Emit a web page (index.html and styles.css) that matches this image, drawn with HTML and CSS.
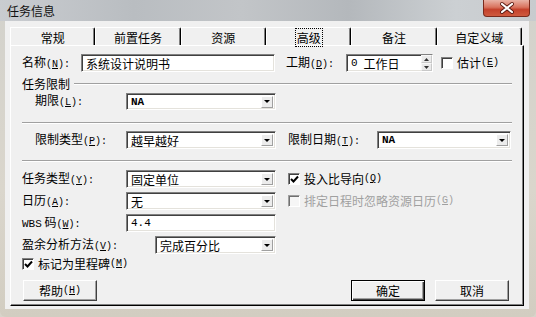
FILE: index.html
```html
<!DOCTYPE html>
<html lang="zh-CN">
<head>
    <meta charset="UTF-8">
    <title>任务信息</title>
    <link rel="stylesheet" href="styles.css">
</head>
<body>
<div class="window">
    <div class="titlebar">
        <span class="title">任务信息</span>
        <span class="close">
            <svg width="47" height="17" viewBox="0 0 47 17">
                <path d="M19 4 L29 12 M29 4 L19 12" stroke="#5a1a12" stroke-width="4" stroke-linecap="round"/>
                <path d="M19 4 L29 12 M29 4 L19 12" stroke="#fff" stroke-width="2.2" stroke-linecap="round"/>
            </svg>
        </span>
    </div>
    <div class="client">
        <div class="tabs">
            <div class="tab">常规</div>
            <div class="tab">前置任务</div>
            <div class="tab">资源</div>
            <div class="tab active"><span class="focus">高级</span></div>
            <div class="tab">备注</div>
            <div class="tab">自定义域</div>
        </div>
        <div class="panel">
            <div class="row row-name">
                <span class="lbl name-label">名称<span class="k">(<u>N</u>):</span></span>
                <div class="field name-field">系统设计说明书</div>
                <span class="lbl dur-label">工期<span class="k">(<u>D</u>):</span></span>
                <div class="field dur-field">
                    <span class="mono">0</span><span class="dur-unit">工作日</span>
                    <span class="spin">
                        <span class="spin-btn"><svg width="5" height="3"><path d="M0 3 L2.5 0 L5 3 Z" fill="#333"/></svg></span>
                        <span class="spin-btn"><svg width="5" height="3"><path d="M0 0 L2.5 3 L5 0 Z" fill="#333"/></svg></span>
                    </span>
                </div>
                <span class="check est-check"><span class="box"></span>估计<span class="k">(<u>E</u>)</span></span>
            </div>

            <div class="group">
                <span>任务限制</span>
                <span class="etch"></span>
            </div>

            <div class="row row-deadline">
                <span class="lbl limit-label">期限<span class="k">(<u>L</u>):</span></span>
                <div class="field combo c150"><span class="mono bold">NA</span><span class="drop"></span></div>
            </div>

            <div class="sep sep-1"></div>

            <div class="row row-constraint">
                <span class="lbl limit-label">限制类型<span class="k">(<u>P</u>):</span></span>
                <div class="field combo c150">越早越好<span class="drop"></span></div>
                <span class="lbl date-label">限制日期<span class="k">(<u>T</u>):</span></span>
                <div class="field combo c134"><span class="mono bold">NA</span><span class="drop"></span></div>
            </div>

            <div class="sep sep-2"></div>

            <div class="row row-type">
                <span class="lbl type-label">任务类型<span class="k">(<u>Y</u>):</span></span>
                <div class="field combo c150">固定单位<span class="drop"></span></div>
                <span class="check side-check"><span class="box checked"><svg width="9" height="9" viewBox="0 0 9 9"><path d="M1 4 L3.5 6.5 L8 1.5" stroke="#000" stroke-width="2" fill="none"/></svg></span>投入比导向<span class="k">(<u>Q</u>)</span></span>
            </div>

            <div class="row row-tight">
                <span class="lbl type-label">日历<span class="k">(<u>A</u>):</span></span>
                <div class="field combo c150">无<span class="drop"></span></div>
                <span class="check side-check disabled"><span class="box"></span>排定日程时忽略资源日历<span class="k">(<u>G</u>)</span></span>
            </div>

            <div class="row row-tight">
                <span class="lbl type-label"><span class="mono">WBS</span> 码<span class="k">(<u>W</u>):</span></span>
                <div class="field c150"><span class="mono">4.4</span></div>
            </div>

            <div class="row row-tight">
                <span class="lbl ev-label">盈余分析方法<span class="k">(<u>V</u>):</span></span>
                <div class="field combo c121">完成百分比<span class="drop"></span></div>
            </div>

            <div class="row row-milestone">
                <span class="check"><span class="box checked"><svg width="9" height="9" viewBox="0 0 9 9"><path d="M1 4 L3.5 6.5 L8 1.5" stroke="#000" stroke-width="2" fill="none"/></svg></span>标记为里程碑<span class="k">(<u>M</u>)</span></span>
            </div>

            <div class="row row-buttons">
                <span class="btn">帮助<span class="k">(<u>H</u>)</span></span>
                <span class="spacer"></span>
                <span class="btn default">确定</span>
                <span class="btn cancel">取消</span>
            </div>
        </div>
    </div>
</div>
</body>
</html>
```

FILE: styles.css
```css
body {
    margin: 0;
    padding: 0;
    font-family: "Noto Sans CJK SC", sans-serif;
    font-size: 12px;
    color: #000;
    background-color: #d8d4ca;
}
.window {
    width: 536px;
    height: 317px;
    box-sizing: border-box;
    padding: 0 7px 0 5px;
    background: linear-gradient(180deg, #d3d2cc 0%, #dad6cc 60%, #d2cdc1 100%);
    border-bottom-left-radius: 6px;
    border-bottom-right-radius: 6px;
    overflow: hidden;
}
.titlebar {
    height: 21px;
    margin: 0 -7px 0 -5px;
    padding-left: 7px;
    display: flex;
    justify-content: space-between;
    background: linear-gradient(90deg, #c9ccd0 0%, #b9bdc1 25%, #c2c5c8 45%, #b4b8bc 65%, #ccd0d3 85%, #c8cbce 100%);
}
.title {
    line-height: 22px;
    color: #111;
}
.close {
    width: 47px;
    height: 17px;
    margin-right: 6px;
    box-sizing: border-box;
    border: 1px solid #7a2a1c;
    border-top: none;
    border-bottom-left-radius: 4px;
    border-bottom-right-radius: 4px;
    background: linear-gradient(180deg, #e9b2a5 0%, #d9735e 45%, #c4412b 60%, #cf5a3e 100%);
    overflow: hidden;
}
.close svg {
    display: block;
    margin-left: -1px;
}
.client {
    height: 288px;
    box-sizing: border-box;
    padding: 6px 5px 3px 5px;
    background-color: #f0f0f0;
}
.tabs {
    display: flex;
    width: 512px;
    height: 18px;
}
.tab {
    flex: 1;
    box-sizing: border-box;
    border-top: 1px solid #fff;
    border-left: 1px solid #fff;
    border-right: 1px solid #000;
    border-top-right-radius: 2px;
    box-shadow: inset -1px 0 0 #808080;
    text-align: center;
    line-height: 17px;
    padding-top: 1px;
}
.focus {
    outline: 1px dotted #000;
    outline-offset: 0;
    padding: 0 1px;
}
.panel {
    width: 514px;
    height: 261px;
    box-sizing: border-box;
    padding: 8px 11px 3px 11px;
    border: 1px solid;
    border-color: #fff #000 #000 #fff;
    box-shadow: inset -1px -1px 0 #808080;
}
.row {
    display: flex;
    align-items: center;
    height: 18px;
}
.row-deadline {
    margin-top: 3px;
    height: 17px;
}
.row-constraint {
    margin-top: 7px;
}
.row-type {
    margin-top: 8px;
}
.row-tight {
    margin-top: 4px;
}
.row-milestone {
    margin-top: 4px;
    height: 12px;
}
.row-buttons {
    margin-top: 10px;
    height: 21px;
}
.lbl {
    flex: none;
    white-space: nowrap;
    line-height: 14px;
}
.k {
    font-family: "Liberation Mono", monospace;
    font-size: 10px;
}
.mono {
    font-family: "Liberation Mono", monospace;
    font-size: 11px;
}
.bold {
    font-weight: bold;
}
.name-label { width: 59px; }
.dur-label { width: 60px; margin-left: 11px; }
.limit-label { width: 91px; margin-left: 13px; }
.date-label { width: 89px; margin-left: 12px; }
.type-label { width: 104px; }
.ev-label { width: 133px; }

.field {
    flex: none;
    height: 100%;
    box-sizing: border-box;
    display: flex;
    align-items: center;
    padding-left: 4px;
    background-color: #fff;
    border: 1px solid;
    border-color: #808080 #fff #fff #808080;
    box-shadow: inset 1px 1px 0 #404040, inset -1px -1px 0 #e4e2dc;
    white-space: nowrap;
}
.name-field { width: 194px; }
.dur-field { width: 87px; padding-right: 0; }
.c150 { width: 150px; }
.c134 { width: 134px; }
.c121 { width: 121px; }
.dur-unit {
    margin-left: 6px;
}
.spin {
    margin-left: auto;
    width: 11px;
    height: 16px;
    display: flex;
    flex-direction: column;
}
.spin-btn {
    flex: 1;
    display: flex;
    align-items: center;
    justify-content: center;
    background-color: #eaeaea;
    border: 1px solid #f8f8f8;
    border-right-color: #c8c8c8;
    border-bottom-color: #c8c8c8;
}
.spin-btn svg { display: block; }
.drop {
    margin-left: auto;
    margin-right: 2px;
    width: 12px;
    height: 12px;
    box-sizing: border-box;
    border: 1px solid;
    border-color: #fff #a0a0a0 #a0a0a0 #fff;
    background-color: #ececec;
    display: flex;
    align-items: center;
    justify-content: center;
}
.drop::after {
    content: "";
    border-left: 3px solid transparent;
    border-right: 3px solid transparent;
    border-top: 3px solid #000;
}
.check {
    display: flex;
    align-items: center;
    white-space: nowrap;
    line-height: 14px;
}
.box {
    flex: none;
    width: 12px;
    height: 12px;
    box-sizing: border-box;
    margin-right: 4px;
    background-color: #fff;
    border: 1px solid;
    border-color: #808080 #fff #fff #808080;
    box-shadow: inset 1px 1px 0 #404040;
    display: flex;
    align-items: center;
    justify-content: center;
}
.box svg {
    display: block;
    margin: 1px 0 0 1px;
}
.est-check { margin-left: 8px; }
.side-check { margin-left: 12px; }
.disabled { color: #a0a0a0; }
.disabled .box {
    background-color: #f6f6f6;
    border-color: #a0a0a0 #fff #fff #a0a0a0;
    box-shadow: inset 1px 1px 0 #707070;
}
.group {
    display: flex;
    align-items: center;
    height: 13px;
    margin-top: 5px;
    line-height: 13px;
}
.etch {
    flex: 1;
    margin-left: 4px;
    border-top: 1px solid #a0a0a0;
    border-bottom: 1px solid #fff;
}
.sep {
    height: 0;
    border-top: 1px solid #a0a0a0;
    border-bottom: 1px solid #fff;
}
.sep-1 { margin-top: 12px; }
.sep-2 { margin-top: 11px; }
.spacer { flex: 1; }
.btn {
    flex: none;
    width: 74px;
    height: 21px;
    box-sizing: border-box;
    display: flex;
    align-items: center;
    justify-content: center;
    background-color: #f0f0f0;
    border: 1px solid;
    border-color: #fff #404040 #404040 #fff;
    box-shadow: inset -1px -1px 0 #a0a0a0;
    margin-left: 1px;
}
.btn.default {
    border: 1px solid #000;
    box-shadow: inset 1px 1px 0 #fff, inset -1px -1px 0 #404040, inset -2px -2px 0 #a0a0a0;
}
.btn.cancel {
    margin-left: 10px;
    margin-right: 3px;
}
```
